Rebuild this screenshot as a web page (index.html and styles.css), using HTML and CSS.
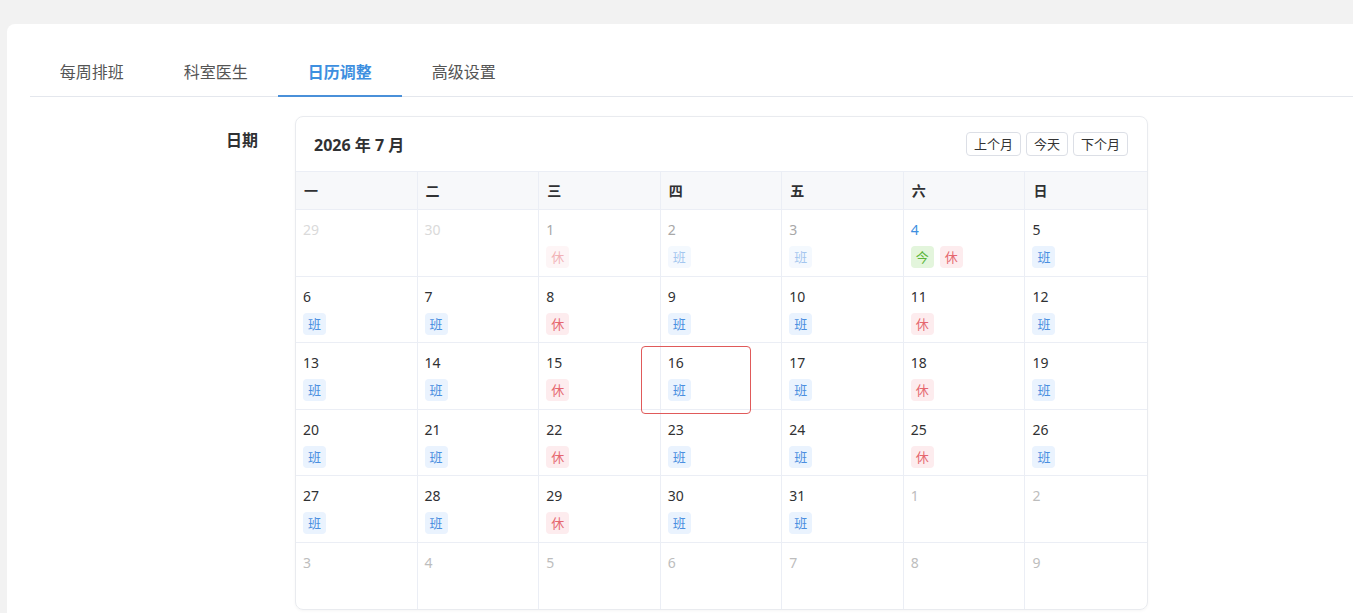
FILE: index.html
```html
<!DOCTYPE html>
<html lang="zh-CN">
  <head>
    <meta charset="UTF-8" />
    <title>日历调整</title>
    <link rel="stylesheet" href="styles.css">
  </head>
  <body>
    <div class="card">
      <!-- 顶部标签 -->
      <div class="tabs">
        <div class="tab">每周排班</div>
        <div class="tab">科室医生</div>
        <div class="tab active">日历调整</div>
        <div class="tab">高级设置</div>
      </div>

      <div class="formRow">
        <div class="formLabel">日期</div>
        <div class="calendar">
          <div class="calHead">
            <div class="calTitle">2026 年 7 月</div>
            <div class="calBtns">
              <button class="btn">上个月</button>
              <button class="btn">今天</button>
              <button class="btn">下个月</button>
            </div>
          </div>
          <div class="weekRow">
            <div class="weekCell">一</div>
            <div class="weekCell">二</div>
            <div class="weekCell">三</div>
            <div class="weekCell">四</div>
            <div class="weekCell">五</div>
            <div class="weekCell">六</div>
            <div class="weekCell">日</div>
          </div>
          <div class="days"></div>
          <!-- 选中框 -->
          <div class="pickBox"></div>
        </div>
      </div>
    </div>

    <script>
      // 日历数据：p 上月 / n 下月 / past 已过 / today 今天
      var cells = [
        { d: 29, t: "p" }, { d: 30, t: "p" },
        { d: 1, t: "past", tags: ["xiu"] }, { d: 2, t: "past", tags: ["ban"] },
        { d: 3, t: "past", tags: ["ban"] }, { d: 4, t: "today", tags: ["jin", "xiu"] },
        { d: 5, tags: ["ban"] }
      ];
      var rest = [8, 11, 15, 18, 22, 25, 29];
      for (var i = 6; i <= 31; i++) {
        cells.push({ d: i, tags: [rest.indexOf(i) > -1 ? "xiu" : "ban"] });
      }
      for (var j = 1; j <= 9; j++) {
        cells.push({ d: j, t: "n" });
      }

      var names = { ban: "班", xiu: "休", jin: "今" };
      var html = "";
      cells.forEach(function (c) {
        html += '<div class="dayCell ' + (c.t || "") + '">';
        html += '<div class="dayNum">' + c.d + "</div>";
        if (c.tags) {
          html += '<div class="tags">';
          c.tags.forEach(function (g) {
            html += '<span class="tag ' + g + '">' + names[g] + "</span>";
          });
          html += "</div>";
        }
        html += "</div>";
      });
      document.querySelector(".days").innerHTML = html;
    </script>
  </body>
</html>
```

FILE: styles.css
```css
* {
  margin: 0;
  padding: 0;
  box-sizing: border-box;
}
html, body {
  height: 100%;
  overflow: hidden;
}
body {
  background: #f2f2f2;
  font-family: "Noto Sans", "Noto Sans CJK SC", sans-serif;
  color: #303133;
}
.card {
  width: 1380px;
  height: 589px;
  margin: 24px 0 0 7px;
  padding: 24px 0 0 23px;
  background: #fff;
  border-radius: 8px 8px 0 0;
}
.tabs {
  display: flex;
  height: 49px;
  border-bottom: 1px solid #e4e7ed;
}
.tab {
  height: 48px;
  line-height: 46px;
  padding: 0 30.2px 0 29.8px;
  font-size: 16px;
  color: #555;
  font-family: "Noto Sans CJK SC", sans-serif;
}
.tab.active {
  color: #3d8fe0;
  font-weight: bold;
  border-bottom: 2px solid #4a90d9;
  height: 49px;
  line-height: 46px;
}
.formRow {
  display: flex;
  margin-top: 19px;
}
.formLabel {
  width: 228px;
  margin-right: 37px;
  padding-top: 11px;
  text-align: right;
  font-size: 16px;
  font-weight: bold;
  color: #303133;
  font-family: "Noto Sans CJK SC", sans-serif;
}
.calendar {
  position: relative;
  width: 853px;
  border: 1px solid #e9ebef;
  border-radius: 8px;
  overflow: hidden;
  box-shadow: 0 1px 3px rgba(0, 0, 0, 0.04);
}
.calHead {
  display: flex;
  align-items: center;
  justify-content: space-between;
  height: 54px;
  padding: 0 19px 0 18px;
}
.calTitle {
  font-size: 16px;
  font-weight: bold;
  color: #303133;
}
.calBtns {
  display: flex;
  gap: 5px;
  margin-top: -1px;
}
.btn {
  height: 24px;
  padding: 0 7px;
  font-size: 13px;
  font-family: "Noto Sans CJK SC", sans-serif;
  color: #333;
  background: #fff;
  border: 1px solid #dcdfe6;
  border-radius: 4px;
}
.weekRow {
  display: grid;
  grid-template-columns: repeat(7, 1fr);
  height: 39px;
  background: #f7f8fa;
  border-top: 1px solid #ebeef5;
  border-bottom: 1px solid #ebeef5;
}
.weekCell {
  padding-left: 8px;
  line-height: 37px;
  font-size: 14px;
  font-weight: bold;
  color: #303133;
  border-right: 1px solid #ebeef5;
  font-family: "Noto Sans CJK SC", sans-serif;
}
.weekCell:last-child {
  border-right: none;
}
.days {
  display: grid;
  grid-template-columns: repeat(7, 1fr);
  grid-auto-rows: 66.5px;
}
.dayCell {
  padding: 10px 7px 0;
  border-right: 1px solid #ebeef5;
  border-bottom: 1px solid #ebeef5;
}
.dayCell:nth-child(7n) {
  border-right: none;
}
.dayCell:nth-last-child(-n+7) {
  border-bottom: none;
}
.dayNum {
  font-size: 14px;
  line-height: 20px;
  color: #303133;
}
.dayCell.p .dayNum {
  color: #dadada;
}
.dayCell.n .dayNum {
  color: #bdbdbd;
}
.dayCell.past .dayNum {
  color: #a8a8a8;
}
.dayCell.past .tags {
  opacity: 0.5;
}
.dayCell.today .dayNum {
  color: #3d8fe0;
}
.tags {
  display: flex;
  gap: 6px;
  margin-top: 6px;
}
.tag {
  height: 22px;
  line-height: 22px;
  padding: 0 5px;
  font-size: 13px;
  border-radius: 4px;
  font-family: "Noto Sans CJK SC", sans-serif;
}
.tag.ban {
  background: #eaf3fe;
  color: #4a8fe0;
}
.tag.xiu {
  background: #fdecee;
  color: #e5676f;
}
.tag.jin {
  background: #e3f5dc;
  color: #5bb53a;
}
.pickBox {
  position: absolute;
  left: 345px;
  top: 229px;
  width: 110px;
  height: 68px;
  border: 1.5px solid #e05a5a;
  border-radius: 4px;
}
```
